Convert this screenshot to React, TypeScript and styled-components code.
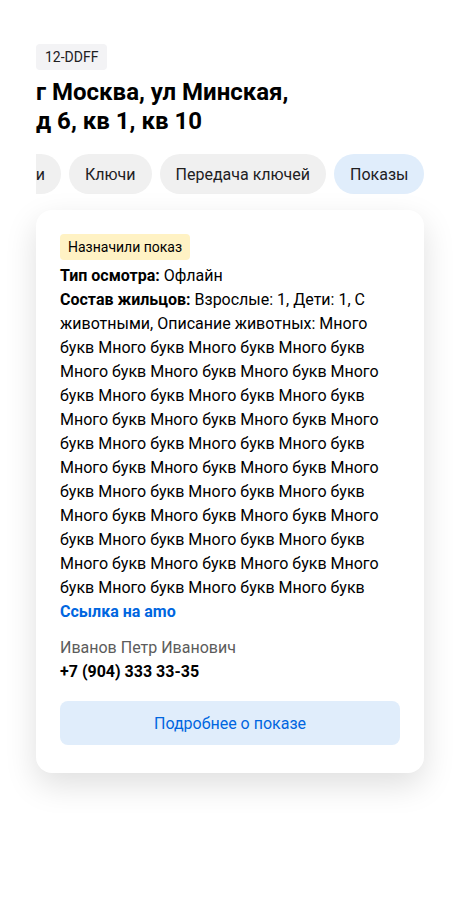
import { useEffect, useRef } from "react";
import styled, { createGlobalStyle } from "styled-components";

const tabs = ["Заявки", "Ключи", "Передача ключей", "Показы"];
const activeTab = "Показы";
const residents =
    "Взрослые: 1, Дети: 1, С животными, Описание животных: " +
    Array(39).fill("Много букв").join(" ");

export default function App() {
    const tabsRef = useRef<HTMLDivElement>(null);

    useEffect(() => {
        const el = tabsRef.current;
        if (el) el.scrollLeft = el.scrollWidth;
    }, []);

    return (
        <>
            <GlobalStyle />
            <Page>
                <Code>12-DDFF</Code>
                <Title>г Москва, ул Минская,<br />д 6, кв 1, кв 10</Title>
                <Tabs ref={tabsRef}>
                    {tabs.map((t) => (
                        <Tab key={t} $active={t === activeTab}>{t}</Tab>
                    ))}
                </Tabs>
                <Card>
                    <Status>Назначили показ</Status>
                    <Info>
                        <Row><b>Тип осмотра:</b> Офлайн</Row>
                        <Row><b>Состав жильцов:</b> {residents}</Row>
                        <Link href="#">Ссылка на amo</Link>
                    </Info>
                    <Contact>
                        <Name>Иванов Петр Иванович</Name>
                        <Phone>+7 (904) 333 33-35</Phone>
                    </Contact>
                    <MoreButton>Подробнее о показе</MoreButton>
                </Card>
            </Page>
        </>
    );
}

const GlobalStyle = createGlobalStyle`
    body {
        margin: 0;
        background: #fff;
        font-family: Roboto, "Noto Sans", sans-serif;
        color: #000;
    }
    * { box-sizing: border-box; }
`;

const Page = styled.div`
    width: 388px;
    margin: 0 36px;
    padding: 44px 0 40px;
    display: flex;
    flex-direction: column;
    align-items: flex-start;
`;

const Code = styled.span`
    background: #f3f3f5;
    border-radius: 4px;
    padding: 0 9px;
    height: 26px;
    line-height: 26px;
    font-size: 14px;
    color: #21201f;
`;

const Title = styled.h1`
    margin: 8px 0 0;
    font-size: 24px;
    line-height: 29px;
    font-weight: 700;
`;

const Tabs = styled.div`
    margin-top: 18px;
    width: 100%;
    display: flex;
    gap: 8px;
    overflow-x: auto;
    scrollbar-width: none;
    &::-webkit-scrollbar { display: none; }
`;

const Tab = styled.button<{ $active?: boolean }>`
    flex: none;
    height: 40px;
    padding: 0 16px;
    border: none;
    border-radius: 20px;
    font: inherit;
    font-size: 16px;
    color: #21201f;
    background: ${(p) => (p.$active ? "#e0edfb" : "#f0f0f0")};
`;

const Card = styled.div`
    margin-top: 16px;
    width: 100%;
    background: #fff;
    border-radius: 16px;
    box-shadow: 0 12px 32px rgba(0, 0, 0, 0.13);
    padding: 24px 24px 28px;
    display: flex;
    flex-direction: column;
    align-items: flex-start;
`;

const Status = styled.span`
    background: #fff2c4;
    border-radius: 4px;
    padding: 0 8px;
    height: 26px;
    line-height: 26px;
    font-size: 14px;
`;

const Info = styled.div`
    margin-top: 4px;
    display: flex;
    flex-direction: column;
    font-size: 16px;
    line-height: 24px;
`;

const Row = styled.div`
    b { font-weight: 700; }
`;

const Link = styled.a`
    color: #0066e0;
    font-weight: 700;
    text-decoration: none;
`;

const Contact = styled.div`
    margin-top: 12px;
    font-size: 16px;
    line-height: 24px;
`;

const Name = styled.div`
    color: #5c5c5c;
`;

const Phone = styled.div`
    font-weight: 700;
`;

const MoreButton = styled.button`
    margin-top: 17px;
    width: 100%;
    height: 44px;
    border: none;
    border-radius: 8px;
    background: #e0edfb;
    color: #0066e0;
    font: inherit;
    font-size: 16px;
`;
